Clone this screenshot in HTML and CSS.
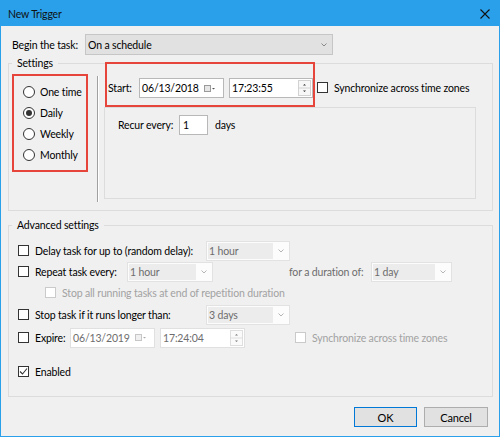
FILE: index.html
```html
<!DOCTYPE html>
<html>
<head>
<meta charset="utf-8">
<link rel="stylesheet" href="styles.css">
</head>
<body>
<div class="window">
  <div class="titlebar">
    <span class="title">New Trigger</span>
    <svg class="close" width="10" height="10" viewBox="0 0 10 10"><path d="M0.5 0.5L9.5 9.5M9.5 0.5L0.5 9.5" stroke="#111" stroke-width="1.1" fill="none"/></svg>
  </div>
  <div class="content">
    <div class="begin-row">
      <span>Begin the task:</span>
      <div class="combo main">
        <span>On a schedule</span>
        <svg width="6" height="4" viewBox="0 0 6 4"><path d="M0.5 0.5L3 3L5.5 0.5" stroke="#888" fill="none"/></svg>
      </div>
    </div>

    <fieldset class="group settings">
      <legend>Settings</legend>
      <div class="settings-inner">
        <div class="radios mark">
          <div class="radio-row"><span class="radio"></span><span>One time</span></div>
          <div class="radio-row"><span class="radio on"></span><span>Daily</span></div>
          <div class="radio-row"><span class="radio"></span><span>Weekly</span></div>
          <div class="radio-row"><span class="radio"></span><span>Monthly</span></div>
        </div>
        <div class="sep"></div>
        <div class="sched">
          <div class="start-row">
            <div class="start mark">
              <span class="start-lbl">Start:</span>
              <div class="field date">
                <span>06/13/2018</span>
                <svg class="cal" width="11" height="7" viewBox="0 0 11 7"><rect x="0.5" y="0.5" width="6" height="6" fill="#e6e6e6" stroke="#9a9a9a"/><path d="M8 3h3l-1.5 1.6z" fill="#555"/></svg>
              </div>
              <div class="field time">
                <span>17:23:55</span>
                <svg class="spin" width="13" height="16" viewBox="0 0 13 16"><rect x="0.5" y="0.5" width="12" height="15" fill="#f7f7f7" stroke="#d2d2d2"/><path d="M1 8h11" stroke="#d2d2d2"/><path d="M5 5.5h3L6.5 4z" fill="#333"/><path d="M5 10.5h3L6.5 12z" fill="#333"/></svg>
              </div>
            </div>
            <div class="check sync"><span class="cb"></span><span>Synchronize across time zones</span></div>
          </div>
          <div class="recur">
            <span class="recur-lbl">Recur every:</span>
            <div class="field num">1</div>
            <span class="days">days</span>
          </div>
        </div>
      </div>
    </fieldset>

    <fieldset class="group advanced">
      <legend>Advanced settings</legend>
      <div class="adv-row r1">
        <span class="cb"></span><span class="w171">Delay task for up to (random delay):</span>
        <div class="combo dis w84"><span class="val">1 hour</span><span class="chev"><svg width="6" height="4" viewBox="0 0 6 4"><path d="M0.5 0.5L3 3L5.5 0.5" stroke="#b5b5b5" fill="none"/></svg></span></div>
      </div>
      <div class="adv-row">
        <span class="cb"></span><span class="w92">Repeat task every:</span>
        <div class="combo dis w86"><span class="val">1 hour</span><span class="chev"><svg width="6" height="4" viewBox="0 0 6 4"><path d="M0.5 0.5L3 3L5.5 0.5" stroke="#b5b5b5" fill="none"/></svg></span></div>
        <span class="dur gray">for a duration of:</span>
        <div class="combo dis w81"><span class="val">1 day</span><span class="chev"><svg width="6" height="4" viewBox="0 0 6 4"><path d="M0.5 0.5L3 3L5.5 0.5" stroke="#b5b5b5" fill="none"/></svg></span></div>
      </div>
      <div class="adv-row sub">
        <span class="cb dis"></span><span class="light">Stop all running tasks at end of repetition duration</span>
      </div>
      <div class="adv-row r4">
        <span class="cb"></span><span class="w171">Stop task if it runs longer than:</span>
        <div class="combo dis w84"><span class="val">3 days</span><span class="chev"><svg width="6" height="4" viewBox="0 0 6 4"><path d="M0.5 0.5L3 3L5.5 0.5" stroke="#b5b5b5" fill="none"/></svg></span></div>
      </div>
      <div class="adv-row r5">
        <span class="cb"></span><span class="w35">Expire:</span>
        <div class="field date dis">
          <span>06/13/2019</span>
          <svg class="cal" width="11" height="7" viewBox="0 0 11 7"><rect x="0.5" y="0.5" width="6" height="6" fill="#f0f0f0" stroke="#c6c6c6"/><path d="M8 3h3l-1.5 1.6z" fill="#aaa"/></svg>
        </div>
        <div class="field time dis">
          <span>17:24:04</span>
          <svg class="spin" width="13" height="16" viewBox="0 0 13 16"><rect x="0.5" y="0.5" width="12" height="15" fill="#fafafa" stroke="#dedede"/><path d="M1 8h11" stroke="#dedede"/><path d="M5 5.5h3L6.5 4z" fill="#777"/><path d="M5 10.5h3L6.5 12z" fill="#777"/></svg>
        </div>
        <div class="check esync"><span class="cb dis"></span><span class="light">Synchronize across time zones</span></div>
      </div>
      <div class="adv-row r6">
        <span class="cb checked"><svg width="9" height="9" viewBox="0 0 9 9"><path d="M1 4.5L3.5 7L8 1.5" stroke="#333" stroke-width="1.1" fill="none"/></svg></span><span>Enabled</span>
      </div>
    </fieldset>

    <div class="buttons">
      <button class="btn ok">OK</button>
      <button class="btn">Cancel</button>
    </div>
  </div>
</div>
</body>
</html>
```

FILE: styles.css
```css
* { box-sizing: border-box; }

body {
  margin: 0;
  font-family: Lato, "Liberation Sans", sans-serif;
  font-size: 10.5px;
  letter-spacing: -0.15px;
  color: #000;
  background: #f0f0f0;
  white-space: nowrap;
}

.window {
  width: 500px;
  height: 437px;
  border: 1px solid #2aa0ea;
  border-top: 0;
  background: #f0f0f0;
  display: flex;
  flex-direction: column;
}

.titlebar {
  height: 26px;
  flex: none;
  background: #2aa0ea;
  display: flex;
  align-items: center;
  justify-content: space-between;
  padding: 2px 9px 0 7px;
  color: #111;
}

.close { display: block; }

.content {
  flex: 1;
  display: flex;
  flex-direction: column;
  padding: 8px 6px 0 7px;
}

.begin-row {
  display: grid;
  grid-template-columns: 73px 248px;
  align-items: center;
  height: 21px;
  padding-left: 4px;
}

.combo {
  display: flex;
  align-items: center;
}

.combo.main {
  height: 21px;
  background: #e1e1e1;
  border: 1px solid #c6c6c6;
  padding: 0 5px 0 2px;
  justify-content: space-between;
}

.group {
  margin: 0;
  min-width: 0;
  border: 1px solid #dcdcdc;
  padding: 0 0 8px 3px;
}

.group legend {
  padding: 0 5px;
  line-height: 16px;
}

.mark { border: 2px solid #e5453b; }

.settings-inner {
  display: flex;
  align-items: flex-start;
}

.radios {
  width: 76px;
  height: 98px;
  margin-top: 3px;
  padding: 5px 0 0 9px;
}

.radio-row {
  height: 21px;
  display: flex;
  align-items: center;
  gap: 5px;
}

.radio {
  width: 12px;
  height: 12px;
  border: 1px solid #333;
  border-radius: 50%;
  background: #fff;
  display: flex;
  align-items: center;
  justify-content: center;
  flex: none;
}

.radio.on::after {
  content: "";
  width: 6px;
  height: 6px;
  border-radius: 50%;
  background: #333;
}

.sep {
  width: 2px;
  height: 126px;
  margin: 5px 0 0 9px;
  border-left: 1px solid #a0a0a0;
  border-right: 1px solid #fff;
  flex: none;
}

.sched {
  flex: 1;
  margin-left: 5px;
  display: flex;
  flex-direction: column;
}

.start-row {
  display: flex;
  align-items: flex-start;
  margin-top: -9px;
}

.start {
  width: 210px;
  height: 45px;
  margin-left: 1px;
  padding: 14px 0 0 1px;
  display: flex;
  align-items: center;
  align-self: flex-start;
}

.start .field { align-self: flex-start; }

.start-lbl {
  width: 31px;
  align-self: flex-start;
  line-height: 20px;
}

.field {
  height: 20px;
  background: #fff;
  border: 1px solid #b8b8b8;
  display: flex;
  align-items: center;
  justify-content: space-between;
  padding: 0 1px 0 2px;
}

.field.date { width: 85px; padding-right: 8px; }
.field.time { width: 85px; margin-left: 5px; }
.start .field.time { width: 84px; }

.field.dis {
  border-color: #e0e0e0;
  color: #6d6d6d;
}

.cal, .spin { display: block; flex: none; }

.check {
  display: flex;
  align-items: center;
  height: 11px;
}

.cb {
  width: 11px;
  height: 11px;
  border: 1px solid #333;
  background: #fff;
  flex: none;
  margin-right: 6px;
  display: flex;
  align-items: center;
  justify-content: center;
}

.cb.dis { border-color: #cacaca; }

.sync {
  margin: 20px 0 0 2px;
}

.recur {
  width: 372px;
  height: 92px;
  border: 1px solid #dcdcdc;
  padding: 7px 0 0 13px;
  display: flex;
  align-items: flex-start;
}

.recur > span {
  height: 20px;
  display: flex;
  align-items: center;
}

.recur-lbl { width: 61px; }

.field.num {
  width: 29px;
  justify-content: flex-start;
  padding-left: 3px;
}

.days { margin-left: 7px; }

.advanced {
  margin-top: 6px;
  padding-bottom: 14px;
}

.adv-row {
  display: flex;
  align-items: center;
  height: 21px;
  padding-left: 6px;
}

.adv-row.r1 { margin-top: 7px; }
.adv-row.sub { padding-left: 33px; }
.adv-row.r4 { margin-top: 1px; }
.adv-row.r5 { margin-top: 2px; }
.adv-row.r6 { margin-top: 13px; }

.w171 { width: 171px; }
.w92 { width: 92px; }
.w35 { width: 35px; }

.combo.dis {
  height: 20px;
  background: #fcfcfc;
  border: 1px solid #e2e2e2;
  padding: 1px;
}

.combo.dis .val {
  flex: 1;
  height: 100%;
  background: #ececec;
  color: #6d6d6d;
  display: flex;
  align-items: center;
  padding-left: 1px;
}

.combo.dis .chev {
  width: 15px;
  display: flex;
  justify-content: center;
  align-items: center;
}

.w84 { width: 84px; }
.w86 { width: 86px; }
.w81 { width: 81px; }

.dur {
  margin-left: 76px;
  width: 82px;
}

.gray { color: #6d6d6d; }
.light { color: #a2a2a2; }

.esync { margin-left: 50px; }

.buttons {
  display: flex;
  justify-content: flex-end;
  gap: 7px;
  margin-top: 10px;
  padding-right: 5px;
}

.btn {
  height: 20px;
  width: 64px;
  background: #e1e1e1;
  border: 1px solid #adadad;
  font-family: inherit;
  font-size: 11px;
  letter-spacing: inherit;
  color: #000;
  padding: 0;
}

.btn.ok {
  width: 63px;
  border-color: #0078d7;
}
```
